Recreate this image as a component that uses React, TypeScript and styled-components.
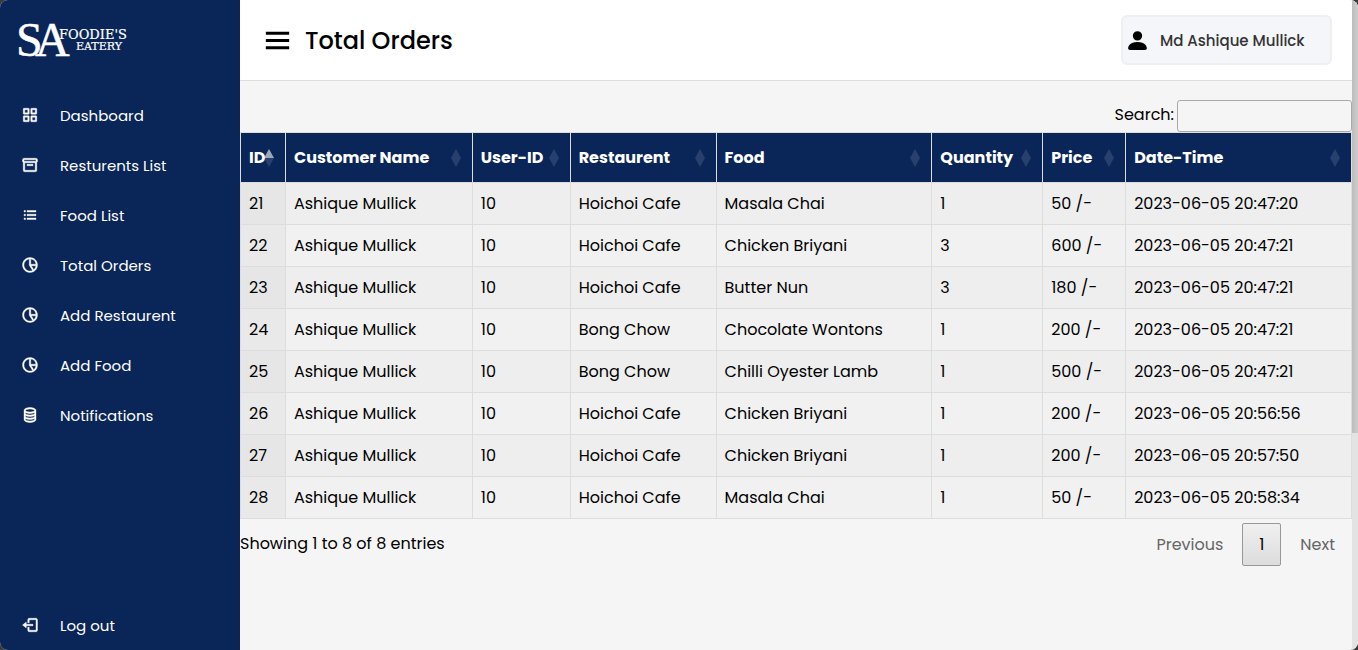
import React from 'react';
import styled, { createGlobalStyle, css } from 'styled-components';
import { BiBox, BiCoinStack, BiGridAlt, BiListUl, BiLogOut, BiMenu, BiPieChartAlt2 } from 'react-icons/bi';
import { BsPersonFill } from 'react-icons/bs';

const navy = '#0a2558';

const GlobalStyle = createGlobalStyle`
  *, *::before, *::after { box-sizing: border-box; }
  body {
    margin: 0;
    background: #3b3b3b;
    color: #000;
    font-family: Poppins, Inter, sans-serif;
    font-size: 16px;
    line-height: 24px;
  }
`;

const Shell = styled.div`
  display: flex;
  min-height: 100vh;
  border-radius: 8px;
  overflow: hidden;
  background: #f5f5f5;
`;

const Sidebar = styled.aside`
  display: flex;
  flex-direction: column;
  flex: 0 0 240px;
  background: ${navy};
`;

const LogoLink = styled.a`
  display: flex;
  align-items: center;
  height: 80px;
  padding-left: 16px;
`;

const Menu = styled.nav`
  display: flex;
  flex: 1;
  flex-direction: column;
  padding-top: 10px;
`;

const MenuLink = styled.a<{ $last?: boolean }>`
  display: flex;
  align-items: center;
  height: 50px;
  color: #fff;
  font-size: 15px;
  text-decoration: none;
  ${({ $last }) => $last && css`margin-top: auto;`}

  svg {
    width: 18px;
    height: 18px;
    margin: 0 21px;
    stroke: currentColor;
    stroke-width: 0.5;
  }

  span {
    padding-top: 2px;
  }
`;

const Main = styled.main`
  flex: 1;
  min-width: 0;
`;

const TopBar = styled.header`
  display: flex;
  align-items: center;
  justify-content: space-between;
  height: 81px;
  padding: 0 20px;
  border-bottom: 1px solid #dedede;
  background: #fff;
`;

const TitleGroup = styled.div`
  display: flex;
  align-items: center;
  gap: 10px;
`;

const MenuButton = styled.button`
  display: flex;
  padding: 0;
  border: 0;
  background: none;
  color: #000;
`;

const Title = styled.h1`
  margin: 0;
  padding-top: 2px;
  font-size: 24px;
  font-weight: 500;
  line-height: 36px;
`;

const Profile = styled.button`
  display: flex;
  align-items: center;
  gap: 10px;
  width: 211px;
  height: 50px;
  padding: 0 2px;
  border: 2px solid #efeef1;
  border-radius: 6px;
  background: #f5f6fa;
  color: #000;
  font: inherit;

  span {
    padding-top: 2px;
    color: #333;
    font-size: 15px;
    font-weight: 500;
    white-space: nowrap;
  }
`;

const SearchRow = styled.div`
  display: flex;
  justify-content: flex-end;
  padding-top: 19px;
`;

const SearchLabel = styled.label`
  display: flex;
  align-items: flex-start;
  gap: 3px;
  line-height: 30px;
`;

const SearchInput = styled.input`
  width: 175px;
  height: 32px;
  padding: 5px;
  border: 1px solid #aaa;
  border-radius: 3px;
  background: transparent;
  font: inherit;
`;

const OrdersTable = styled.table`
  width: 100%;
  border-collapse: collapse;
  table-layout: fixed;
`;

const HeadCell = styled.th`
  height: 50px;
  padding: 0 8px;
  border: 1px solid #ddd;
  background: ${navy};
  color: #fff;
  font-weight: 700;
  text-align: left;
  white-space: nowrap;
`;

const SortButton = styled.button`
  display: flex;
  align-items: center;
  justify-content: space-between;
  width: 100%;
  padding: 0 3px 0 0;
  border: 0;
  background: none;
  color: inherit;
  font: inherit;

  span {
    min-width: 0;
  }
`;

const SortIcon = styled.svg`
  flex: none;
  width: 10px;
  height: 18px;
`;

const BodyRow = styled.tr`
  background: #f1f1f1;
  &:nth-child(odd) { background: #eee; }
`;

const Cell = styled.td<{ $sorted?: boolean }>`
  height: 42px;
  padding: 0 8px;
  border: 1px solid #ddd;
  white-space: nowrap;
  background: ${({ $sorted }) => ($sorted ? 'rgba(0, 0, 0, 0.03)' : 'transparent')};
`;

const TableFooter = styled.footer`
  display: flex;
  justify-content: space-between;
  align-items: flex-start;
  padding-top: 4px;
`;

const EntryInfo = styled.p`
  margin: 9px 0 0;
`;

const Pager = styled.div`
  display: flex;
  gap: 2px;
`;

const PageButton = styled.button<{ $current?: boolean }>`
  height: 43px;
  padding: 0 16px;
  border: 1px solid transparent;
  border-radius: 2px;
  background: none;
  color: #666;
  font: inherit;
  ${({ $current }) => $current && css`
    width: 39px;
    border-color: #989898;
    background: linear-gradient(#f0f0f0, #dcdcdc);
    color: #000;
  `}
`;

const ScrollTrack = styled.div`
  flex: 0 0 6px;
  background: #e3e3e3;
`;

const ScrollThumb = styled.div`
  height: 433px;
  background: linear-gradient(to right, #bdbdbd, #cdcdcd);
`;

const menu = [
  { label: 'Dashboard', Icon: BiGridAlt },
  { label: 'Resturents List', Icon: BiBox },
  { label: 'Food List', Icon: BiListUl },
  { label: 'Total Orders', Icon: BiPieChartAlt2 },
  { label: 'Add Restaurent', Icon: BiPieChartAlt2 },
  { label: 'Add Food', Icon: BiPieChartAlt2 },
  { label: 'Notifications', Icon: BiCoinStack },
];

const columns = [
  { label: 'ID', width: 45 },
  { label: 'Customer Name', width: 187 },
  { label: 'User-ID', width: 98 },
  { label: 'Restaurent', width: 146 },
  { label: 'Food', width: 216 },
  { label: 'Quantity', width: 111 },
  { label: 'Price', width: 83 },
  { label: 'Date-Time', width: 226 },
];
const totalWidth = columns.reduce((sum, column) => sum + column.width, 0);

const orders = [
  ['21', 'Ashique Mullick', '10', 'Hoichoi Cafe', 'Masala Chai', '1', '50 /-', '2023-06-05 20:47:20'],
  ['22', 'Ashique Mullick', '10', 'Hoichoi Cafe', 'Chicken Briyani', '3', '600 /-', '2023-06-05 20:47:21'],
  ['23', 'Ashique Mullick', '10', 'Hoichoi Cafe', 'Butter Nun', '3', '180 /-', '2023-06-05 20:47:21'],
  ['24', 'Ashique Mullick', '10', 'Bong Chow', 'Chocolate Wontons', '1', '200 /-', '2023-06-05 20:47:21'],
  ['25', 'Ashique Mullick', '10', 'Bong Chow', 'Chilli Oyester Lamb', '1', '500 /-', '2023-06-05 20:47:21'],
  ['26', 'Ashique Mullick', '10', 'Hoichoi Cafe', 'Chicken Briyani', '1', '200 /-', '2023-06-05 20:56:56'],
  ['27', 'Ashique Mullick', '10', 'Hoichoi Cafe', 'Chicken Briyani', '1', '200 /-', '2023-06-05 20:57:50'],
  ['28', 'Ashique Mullick', '10', 'Hoichoi Cafe', 'Masala Chai', '1', '50 /-', '2023-06-05 20:58:34'],
];

function Logo() {
  return (
    <svg width="120" height="60" viewBox="0 0 120 60" role="img" aria-label="SA Foodie's Eatery" fill="#fff">
      <text x="0" y="46" fontFamily="Liberation Serif, serif" fontSize="48" stroke="#fff" strokeWidth="0.5">
        S<tspan x="19">A</tspan>
      </text>
      <g fontFamily="DejaVu Serif, serif" stroke="#fff" strokeWidth="0.2">
        <text x="43" y="29" fontSize="13">FOODIE'S</text>
        <text x="60" y="40" fontSize="11">EATERY</text>
      </g>
    </svg>
  );
}

function SortMark({ ascending }: { ascending?: boolean }) {
  return (
    <SortIcon viewBox="0 0 10 18" fill="#fff" aria-hidden="true">
      <path d="M5 0 10 9H0Z" opacity={ascending ? 0.6 : 0.125} />
      <path d="M0 9h10L5 18Z" opacity="0.125" />
    </SortIcon>
  );
}

export default function App() {
  return (
    <>
      <GlobalStyle />
      <Shell>
        <Sidebar>
          <LogoLink href="#home"><Logo /></LogoLink>
          <Menu>
            {menu.map(({ label, Icon }) => (
              <MenuLink href="#" key={label}><Icon /><span>{label}</span></MenuLink>
            ))}
            <MenuLink href="#logout" $last><BiLogOut /><span>Log out</span></MenuLink>
          </Menu>
        </Sidebar>
        <Main>
          <TopBar>
            <TitleGroup>
              <MenuButton aria-label="Toggle menu"><BiMenu size={35} /></MenuButton>
              <Title>Total Orders</Title>
            </TitleGroup>
            <Profile><BsPersonFill size={25} /><span>Md Ashique Mullick</span></Profile>
          </TopBar>
          <SearchRow>
            <SearchLabel>Search:<SearchInput type="search" /></SearchLabel>
          </SearchRow>
          <OrdersTable>
            <colgroup>
              {columns.map(({ label, width }) => (
                <col key={label} style={{ width: `${(width / totalWidth) * 100}%` }} />
              ))}
            </colgroup>
            <thead>
              <tr>
                {columns.map(({ label }, index) => (
                  <HeadCell key={label} scope="col">
                    <SortButton><span>{label}</span><SortMark ascending={index === 0} /></SortButton>
                  </HeadCell>
                ))}
              </tr>
            </thead>
            <tbody>
              {orders.map((order) => (
                <BodyRow key={order[0]}>
                  {order.map((value, index) => (
                    <Cell key={columns[index].label} $sorted={index === 0}>{value}</Cell>
                  ))}
                </BodyRow>
              ))}
            </tbody>
          </OrdersTable>
          <TableFooter>
            <EntryInfo>Showing 1 to 8 of 8 entries</EntryInfo>
            <Pager>
              <PageButton>Previous</PageButton>
              <PageButton $current>1</PageButton>
              <PageButton>Next</PageButton>
            </Pager>
          </TableFooter>
        </Main>
        <ScrollTrack><ScrollThumb /></ScrollTrack>
      </Shell>
    </>
  );
}
